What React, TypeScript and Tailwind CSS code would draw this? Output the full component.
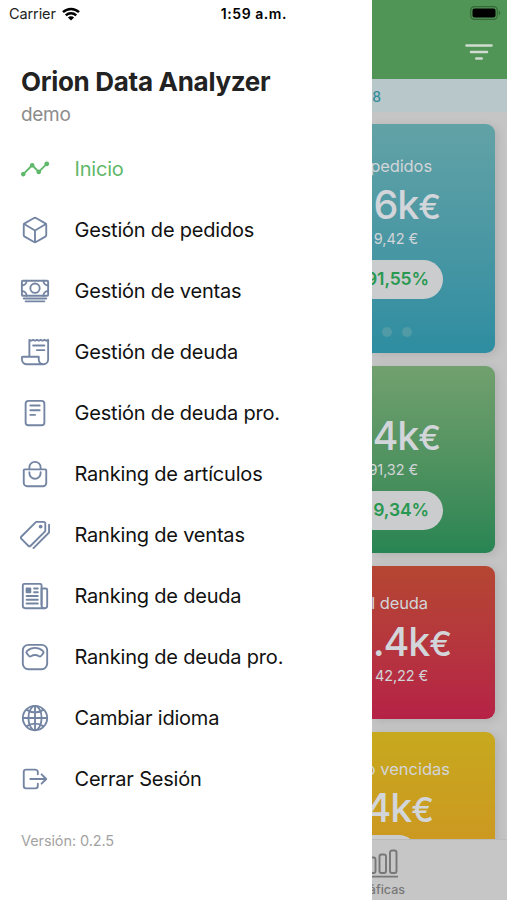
import React from 'react'
import type { IconType } from 'react-icons'
import {
  IoAnalytics,
  IoBagHandleOutline,
  IoCashOutline,
  IoCubeOutline,
  IoGlobeOutline,
  IoLogOutOutline,
  IoNewspaperOutline,
  IoPricetagsOutline,
  IoReaderOutline,
  IoReceiptOutline,
  IoScaleOutline,
} from 'react-icons/io5'

interface MenuItem {
  label: string
  icon: IconType
  active?: boolean
}

const menuItems: MenuItem[] = [
  { label: 'Inicio', icon: IoAnalytics, active: true },
  { label: 'Gestión de pedidos', icon: IoCubeOutline },
  { label: 'Gestión de ventas', icon: IoCashOutline },
  { label: 'Gestión de deuda', icon: IoReceiptOutline },
  { label: 'Gestión de deuda pro.', icon: IoReaderOutline },
  { label: 'Ranking de artículos', icon: IoBagHandleOutline },
  { label: 'Ranking de ventas', icon: IoPricetagsOutline },
  { label: 'Ranking de deuda', icon: IoNewspaperOutline },
  { label: 'Ranking de deuda pro.', icon: IoScaleOutline },
  { label: 'Cambiar idioma', icon: IoGlobeOutline },
  { label: 'Cerrar Sesión', icon: IoLogOutOutline },
]

const WifiIcon: React.FC = () => (
  <svg width="18" height="14" viewBox="0 0 18 14" fill="none" stroke="#000" strokeWidth="2.5">
    <path d="M1 5.1a11.6 11.6 0 0 1 16 0" />
    <path d="M3.8 8.4a7.5 7.5 0 0 1 10.4 0" />
    <path d="M9 13.6 5.9 10.6a4.4 4.4 0 0 1 6.2 0Z" fill="#000" stroke="none" />
  </svg>
)

const BatteryIcon: React.FC = () => (
  <svg width="31" height="14" viewBox="0 0 31 14">
    <rect x="0.7" y="0.7" width="26.6" height="12.6" rx="3.6" fill="none" stroke="#35683a" strokeWidth="1.2" />
    <rect x="2.5" y="2.5" width="23" height="9" rx="2" fill="#000" />
    <path d="M28.8 4.8c1.9.6 1.9 3.8 0 4.4Z" fill="#35683a" />
  </svg>
)

const FilterIcon: React.FC = () => (
  <svg width="28" height="18" viewBox="0 0 28 18" stroke="#d0dbd1" strokeWidth="2.6" strokeLinecap="round">
    <path d="M1.5 2.5h25M6 9h16M11.3 15.5h5.4" />
  </svg>
)

const ChartIcon: React.FC = () => (
  <svg width="42" height="30" viewBox="0 0 42 30" fill="none" stroke="currentColor" strokeWidth="1.9">
    <rect x="2" y="13" width="6" height="11" rx="1.6" />
    <rect x="12" y="8.5" width="6.5" height="15.5" rx="2" />
    <rect x="22.5" y="5.5" width="6.5" height="18.5" rx="2" />
    <rect x="33" y="1.5" width="6.5" height="22.5" rx="2" />
    <path d="M0 27.6h41" />
  </svg>
)

const SideMenu: React.FC = () => (
  <aside className="flex w-[372px] shrink-0 flex-col bg-white">
    <div className="flex h-7 items-center pl-[9px]">
      <span className="w-[53px] text-[14.5px] tracking-[-0.1px] text-[#222]">Carrier</span>
      <WifiIcon />
      <span className="ml-auto pr-[85px] pb-px text-[14px] font-semibold tracking-[0.55px] text-black">1:59 a.m.</span>
    </div>
    <div className="h-[110px] pt-9 pl-[21px]">
      <h1 className="text-[26px] leading-9 font-bold tracking-[-0.3px] whitespace-nowrap text-[#222]">
        Orion Data Analyzer
      </h1>
      <p className="pt-px text-[19px] leading-7 tracking-[-0.3px] text-[#8c8c8c]">demo</p>
    </div>
    <nav>
      {menuItems.map(({ label, icon: Icon, active }) => (
        <a key={label} className="flex h-[61px] items-center pl-5">
          <Icon className={active ? 'size-[30px] text-[#5fb86a]' : 'size-[30px] text-[#7485a3]'} />
          <span
            className={`ml-[24.5px] text-[20px] tracking-[-0.2px] whitespace-nowrap ${active ? 'text-[#5fb86a]' : 'text-[#111]'}`}
          >
            {label}
          </span>
        </a>
      ))}
    </nav>
    <p className="pt-[21px] pl-[21px] text-[14.5px] leading-[22px] tracking-[-0.1px] text-[#a3a3a3]">Versión: 0.2.5</p>
  </aside>
)

interface CardProps {
  className: string
  children: React.ReactNode
}

const Card: React.FC<CardProps> = ({ className, children }) => (
  <section
    className={`mr-3 flex shrink-0 flex-col items-end overflow-hidden whitespace-nowrap text-[#d2d5d9] shadow-[3px_2px_10px_rgba(0,0,0,0.1)] ${className}`}
  >
    {children}
  </section>
)

const Amount: React.FC<{ children: string; className: string }> = ({ children, className }) => (
  <div className={`text-[39.5px] leading-[44px] font-[450] tracking-[-1.2px] ${className}`}>
    {children}
    <span className="text-[34px] tracking-normal">€</span>
  </div>
)

const Pill: React.FC<{ children?: string }> = ({ children }) => (
  <div className="mr-[52px] flex h-[39px] w-[130px] shrink-0 items-center justify-end rounded-full bg-[#cbcccd] pr-[14px] text-[17.5px] font-semibold tracking-[-0.1px] text-[#299851]">
    {children}
  </div>
)

const Dashboard: React.FC = () => (
  <main className="flex min-w-0 flex-1 flex-col overflow-hidden bg-[#c5c5c6]">
    <header className="flex h-[79px] shrink-0 flex-col items-end bg-[#509555]">
      <div className="h-5 pt-[6px] pr-[6px]">
        <BatteryIcon />
      </div>
      <div className="mt-[23px] mr-[14px]">
        <FilterIcon />
      </div>
    </header>
    <div className="flex h-[33px] shrink-0 items-center justify-end bg-[#b8c7ca] pt-[2px] pr-[126px] text-[14px] font-medium text-[#328c99]">
      8
    </div>
    <div className="flex min-h-0 flex-1 flex-col gap-[13px] overflow-hidden pt-3">
      <Card className="h-[229px] rounded-tr-[9px] rounded-br-[9px] bg-linear-to-b from-[#62a2a6] to-[#2d8da1]">
        <span className="mt-[31px] mr-[63px] text-[16.5px] leading-[22px] tracking-[-0.1px]">pedidos</span>
        <Amount className="mt-[6px] mr-[54px]">6k</Amount>
        <span className="mr-[77px] text-[14.5px] leading-5 tracking-[-0.1px]">9,42 €</span>
        <div className="mt-[11px]">
          <Pill>91,55%</Pill>
        </div>
        <div className="mt-[28px] mr-[83px] flex gap-[10px]">
          <i className="size-[10px] rounded-full bg-[#509ba5]" />
          <i className="size-[10px] rounded-full bg-[#509ba5]" />
        </div>
      </Card>
      <Card className="h-[187px] rounded-tr-[9px] rounded-br-[9px] bg-linear-to-b from-[#71a06e] to-[#278553]">
        <Amount className="mt-[48px] mr-[54px]">4k</Amount>
        <span className="mr-[77px] text-[14.5px] leading-5 tracking-[-0.1px]">91,32 €</span>
        <div className="mt-[11px]">
          <Pill>9,34%</Pill>
        </div>
      </Card>
      <Card className="h-[153px] rounded-tr-[9px] rounded-br-[9px] bg-linear-to-b from-[#b54632] to-[#b62146]">
        <span className="mt-[26px] mr-[67px] text-[16.5px] leading-[22px] tracking-[-0.1px]">l deuda</span>
        <Amount className="mt-[6px] mr-[43px]">.4k</Amount>
        <span className="mr-[67px] text-[14.5px] leading-5 tracking-[-0.1px]">42,22 €</span>
      </Card>
      <Card className="h-[188px] rounded-tr-[9px] bg-linear-to-b from-[#c7a91e] to-[#cf8c22]">
        <span className="mt-[26px] mr-[45px] text-[16.5px] leading-[22px]">o vencidas</span>
        <Amount className="mt-[6px] mr-[61px]">4k</Amount>
        <div className="mt-[3px] mr-[25px]">
          <Pill />
        </div>
      </Card>
    </div>
    <footer className="flex h-[61px] shrink-0 flex-col items-end border-t border-[#bababa] bg-[#c6c6c6] text-[#777]">
      <div className="mt-[9px] mr-[108px] h-[32px]">
        <ChartIcon />
      </div>
      <span className="mr-[102px] text-[12.5px] leading-[18px] font-medium">áficas</span>
    </footer>
  </main>
)

export default function App() {
  return (
    <div className="flex h-[900px] w-[507px] overflow-hidden font-[Inter,'Noto_Sans',sans-serif]">
      <SideMenu />
      <Dashboard />
    </div>
  )
}
